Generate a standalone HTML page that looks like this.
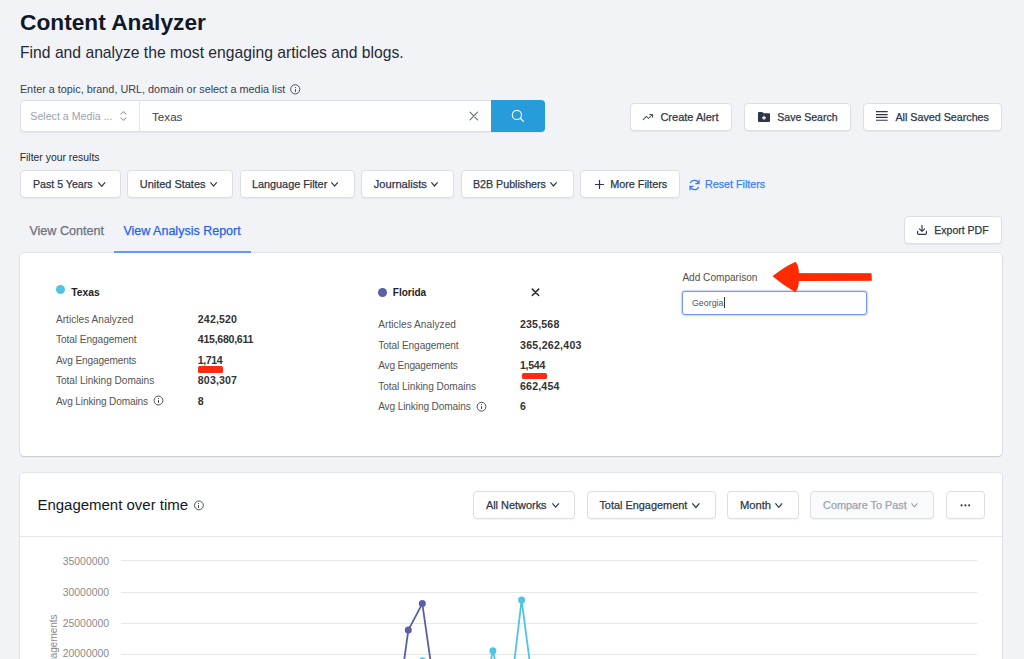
<!DOCTYPE html>
<html><head><meta charset="utf-8">
<style>
*{box-sizing:border-box;margin:0;padding:0}
html,body{width:1024px;height:659px;overflow:hidden}
body{background:#f2f3f6;font-family:"Liberation Sans",sans-serif;position:relative}
.t{position:absolute;white-space:nowrap}
.a{position:absolute}
.btn{position:absolute;background:#fff;border:1px solid #dcdfe4;border-radius:4px;box-shadow:0 1px 1px rgba(16,24,40,0.05)}
svg{position:absolute;overflow:visible}
</style></head>
<body>
<div class="t" style="left:20px;top:6.8px;font-size:22.71px;line-height:30px;font-weight:bold;color:#111827;">Content Analyzer</div>
<div class="t" style="left:20px;top:42.7px;font-size:15.69px;line-height:20px;font-weight:normal;color:#1f2937;">Find and analyze the most engaging articles and blogs.</div>
<div class="t" style="left:19.9px;top:82.2px;font-size:10.84px;line-height:14px;font-weight:normal;color:#374151;">Enter a topic, brand, URL, domain or select a media list</div>
<svg style="left:0;top:0" width="1024" height="659"><circle cx="295.2" cy="89.3" r="4.6" fill="none" stroke="#4b5563" stroke-width="1"/><rect x="295" y="89" width="1" height="3" fill="#4b5563"/><rect x="295" y="87" width="1" height="1" fill="#4b5563"/></svg>
<div class="a" style="left:20px;top:100px;width:525px;height:32px;background:#fff;border:1px solid #dcdfe4;border-radius:4px;box-shadow:0 1px 1px rgba(16,24,40,0.05)"></div>
<div class="a" style="left:139px;top:101px;width:1px;height:30px;background:#e3e6ea"></div>
<div class="t" style="left:30.3px;top:109.3px;font-size:10.65px;line-height:14px;font-weight:normal;color:#9ca3af;">Select a Media ...</div>
<svg style="left:120px;top:111px" width="7" height="10" viewBox="0 0 7 10"><path d="M0.6 3.4 L3.5 0.7 L6.4 3.4 M0.6 6.6 L3.5 9.3 L6.4 6.6" fill="none" stroke="#9ca3af" stroke-width="1.1"/></svg>
<div class="t" style="left:152px;top:108.8px;font-size:11.66px;line-height:15px;font-weight:normal;color:#3f3f46;">Texas</div>
<svg style="left:0;top:0" width="1024" height="659"><path d="M470 112.2 L477.6 119.8 M477.6 112.2 L470 119.8" stroke="#6b7280" stroke-width="1.2" stroke-linecap="round"/></svg>
<div class="a" style="left:491px;top:100px;width:54px;height:32px;background:#279cdb;border-radius:0 4px 4px 0"></div>
<svg style="left:511px;top:109px" width="14" height="14" viewBox="0 0 14 14"><circle cx="5.9" cy="5.9" r="4.6" fill="none" stroke="#fff" stroke-width="1.15"/><path d="M9.3 9.3 L12.4 12.4" stroke="#fff" stroke-width="1.3" stroke-linecap="round"/></svg>
<div class="btn" style="left:630px;top:103px;width:102px;height:28px;background:#fff"></div>
<svg style="left:0;top:0" width="1024" height="659"><path d="M643.2 119.6 L646.4 116.4 L648.5 118.5 L652.3 114.7 M649.7 114.4 L652.6 114.4 L652.6 117.3" fill="none" stroke="#4b5563" stroke-width="1.05" stroke-linecap="round" stroke-linejoin="round"/></svg>
<div class="t" style="left:660.4px;top:109.6px;font-size:11.03px;line-height:14px;font-weight:normal;color:#2d3748;-webkit-text-stroke:0.25px #2d3748;">Create Alert</div>
<div class="btn" style="left:744px;top:103px;width:107px;height:28px;background:#fff"></div>
<svg style="left:758px;top:111.5px" width="12" height="10" viewBox="0 0 12 10"><path d="M0 1 Q0 0 1 0 L4.3 0 L5.5 1.3 L11 1.3 Q12 1.3 12 2.3 L12 9 Q12 10 11 10 L1 10 Q0 10 0 9 Z" fill="#2d3748"/><path d="M6 3.8 L6 7.8 M4 5.8 L8 5.8" stroke="#fff" stroke-width="1.2"/></svg>
<div class="t" style="left:777.3px;top:109.6px;font-size:10.53px;line-height:14px;font-weight:normal;color:#2d3748;-webkit-text-stroke:0.25px #2d3748;">Save Search</div>
<div class="btn" style="left:863px;top:103px;width:139px;height:28px;background:#fff"></div>
<svg style="left:876px;top:111px" width="12" height="11" viewBox="0 0 12 11"><path d="M0 0.7 H11.7 M0 3.55 H11.7 M0 6.4 H11.7 M0 9.25 H11.7" stroke="#2d3748" stroke-width="1.2"/></svg>
<div class="t" style="left:895.4px;top:109.5px;font-size:10.72px;line-height:14px;font-weight:normal;color:#2d3748;-webkit-text-stroke:0.25px #2d3748;">All Saved Searches</div>
<div class="t" style="left:19.7px;top:150.7px;font-size:10.41px;line-height:14px;font-weight:normal;color:#1f2937;">Filter your results</div>
<div class="btn" style="left:20px;top:170px;width:101px;height:28px;background:#fff"></div>
<div class="btn" style="left:127px;top:170px;width:106px;height:28px;background:#fff"></div>
<div class="btn" style="left:240px;top:170px;width:115px;height:28px;background:#fff"></div>
<div class="btn" style="left:361px;top:170px;width:93px;height:28px;background:#fff"></div>
<div class="btn" style="left:461px;top:170px;width:113px;height:28px;background:#fff"></div>
<div class="btn" style="left:580px;top:170px;width:100px;height:28px;background:#fff"></div>
<div class="t" style="left:33px;top:176.9px;font-size:10.62px;line-height:14px;font-weight:normal;color:#2d3748;-webkit-text-stroke:0.25px #2d3748;">Past 5 Years</div>
<svg style="left:96.6px;top:181.05px" width="9.5" height="6.5" viewBox="-1 -1 9.5 6.5"><path d="M0.4 0.4 L3.75 4.3 L7.1 0.4" fill="none" stroke="#2d3748" stroke-width="1.2"/></svg>
<div class="t" style="left:139.8px;top:176.9px;font-size:10.94px;line-height:14px;font-weight:normal;color:#2d3748;-webkit-text-stroke:0.25px #2d3748;">United States</div>
<svg style="left:209.3px;top:181.17000000000002px" width="9.099999999999994" height="6.259999999999996" viewBox="-1 -1 9.099999999999994 6.259999999999996"><path d="M0.4 0.4 L3.549999999999997 4.059999999999996 L6.699999999999994 0.4" fill="none" stroke="#2d3748" stroke-width="1.2"/></svg>
<div class="t" style="left:252px;top:176.9px;font-size:10.83px;line-height:14px;font-weight:normal;color:#2d3748;-webkit-text-stroke:0.25px #2d3748;">Language Filter</div>
<svg style="left:330.4px;top:181.14px" width="9.200000000000045" height="6.320000000000027" viewBox="-1 -1 9.200000000000045 6.320000000000027"><path d="M0.4 0.4 L3.6000000000000227 4.120000000000027 L6.800000000000045 0.4" fill="none" stroke="#2d3748" stroke-width="1.2"/></svg>
<div class="t" style="left:373.8px;top:176.9px;font-size:11.1px;line-height:14px;font-weight:normal;color:#2d3748;-webkit-text-stroke:0.25px #2d3748;">Journalists</div>
<svg style="left:430.4px;top:181.20000000000002px" width="9.0" height="6.2" viewBox="-1 -1 9.0 6.2"><path d="M0.4 0.4 L3.5 4.0 L6.6 0.4" fill="none" stroke="#2d3748" stroke-width="1.2"/></svg>
<div class="t" style="left:473px;top:176.9px;font-size:10.66px;line-height:14px;font-weight:normal;color:#2d3748;-webkit-text-stroke:0.25px #2d3748;">B2B Publishers</div>
<svg style="left:549px;top:181.20000000000002px" width="9" height="6.2" viewBox="-1 -1 9 6.2"><path d="M0.4 0.4 L3.5 4.0 L6.6 0.4" fill="none" stroke="#2d3748" stroke-width="1.2"/></svg>
<svg style="left:595px;top:180px" width="9" height="9" viewBox="0 0 9 9"><path d="M4.5 0 V9 M0 4.5 H9" stroke="#2d3748" stroke-width="1.2"/></svg>
<div class="t" style="left:610.2px;top:176.9px;font-size:10.81px;line-height:14px;font-weight:normal;color:#2d3748;-webkit-text-stroke:0.25px #2d3748;">More Filters</div>
<svg style="left:688.5px;top:178.5px" width="11" height="12" viewBox="0 0 11 12"><path d="M9.6 4.6 A4.4 4.4 0 0 0 1.3 4.0 M1.4 7.4 A4.4 4.4 0 0 0 9.7 8.0" fill="none" stroke="#3b7ff2" stroke-width="1.3"/><path d="M10 0.8 L10 4.6 L6.4 4.6 M1 11.2 L1 7.4 L4.6 7.4" fill="none" stroke="#3b7ff2" stroke-width="1.3"/></svg>
<div class="t" style="left:705px;top:176.9px;font-size:10.73px;line-height:14px;font-weight:normal;color:#3b7ff2;-webkit-text-stroke:0.25px #3b7ff2;">Reset Filters</div>
<div class="t" style="left:29.4px;top:223.1px;font-size:12.58px;line-height:16px;font-weight:normal;color:#6b7280;-webkit-text-stroke:0.25px #6b7280;">View Content</div>
<div class="t" style="left:123.4px;top:222.9px;font-size:12.53px;line-height:16px;font-weight:normal;color:#2563eb;-webkit-text-stroke:0.25px #2563eb;">View Analysis Report</div>
<div class="btn" style="left:904px;top:216px;width:98px;height:28px;background:#fff"></div>
<svg style="left:917px;top:225px" width="10" height="10" viewBox="0 0 10 10"><path d="M5 0.3 V6.3 M2.4 3.8 L5 6.4 L7.6 3.8 M0.6 6.2 V8.2 Q0.6 9.3 1.7 9.3 H8.3 Q9.4 9.3 9.4 8.2 V6.2" fill="none" stroke="#2d3748" stroke-width="1.15" stroke-linecap="round" stroke-linejoin="round"/></svg>
<div class="t" style="left:934.3px;top:222.6px;font-size:10.52px;line-height:14px;font-weight:normal;color:#2d3748;-webkit-text-stroke:0.25px #2d3748;">Export PDF</div>
<div class="a" style="left:20px;top:253px;width:982px;height:203px;background:#fff;border-radius:4px;box-shadow:0 0 0 1px rgba(0,0,0,0.06),0 1px 1.5px rgba(0,0,0,0.12)"></div>
<div class="a" style="left:114px;top:251px;width:137px;height:2px;background:#6099f6"></div>
<div class="a" style="left:55.7px;top:284.9px;width:9px;height:9px;border-radius:50%;background:#4ec5e3"></div>
<div class="t" style="left:71.2px;top:285.8px;font-size:10.3px;line-height:13px;font-weight:bold;color:#222222;">Texas</div>
<div class="t" style="left:55.9px;top:312.8px;font-size:10.1px;line-height:13px;letter-spacing:0.031px;font-weight:normal;color:#555555;">Articles Analyzed</div>
<div class="t" style="left:55.9px;top:333.1px;font-size:10.1px;line-height:13px;letter-spacing:-0.04px;font-weight:normal;color:#555555;">Total Engagement</div>
<div class="t" style="left:55.9px;top:353.7px;font-size:10.1px;line-height:13px;letter-spacing:-0.128px;font-weight:normal;color:#555555;">Avg Engagements</div>
<div class="t" style="left:55.9px;top:374.3px;font-size:10.1px;line-height:13px;letter-spacing:-0.02px;font-weight:normal;color:#555555;">Total Linking Domains</div>
<div class="t" style="left:55.9px;top:395px;font-size:10.1px;line-height:13px;letter-spacing:-0.134px;font-weight:normal;color:#555555;">Avg Linking Domains</div>
<div class="t" style="left:197.8px;top:311.5px;font-size:10.6px;line-height:14px;letter-spacing:0.15px;font-weight:bold;color:#333333;">242,520</div>
<div class="t" style="left:197.8px;top:332.1px;font-size:10.6px;line-height:14px;letter-spacing:-0.27px;font-weight:bold;color:#333333;">415,680,611</div>
<div class="t" style="left:197.8px;top:352.7px;font-size:10.6px;line-height:14px;letter-spacing:-0.4px;font-weight:bold;color:#333333;">1,714</div>
<div class="t" style="left:197.8px;top:372.8px;font-size:10.6px;line-height:14px;letter-spacing:0.15px;font-weight:bold;color:#333333;">803,307</div>
<div class="t" style="left:197.8px;top:394px;font-size:10.6px;line-height:14px;font-weight:bold;color:#333333;">8</div>
<svg style="left:0;top:0" width="1024" height="659"><circle cx="158.5" cy="400.5" r="4.4" fill="none" stroke="#505050" stroke-width="1"/><rect x="158" y="400" width="1" height="3" fill="#505050"/><rect x="158" y="398" width="1" height="1" fill="#505050"/></svg>
<div class="a" style="left:377.5px;top:287.8px;width:9px;height:9px;border-radius:50%;background:#5a5ea8"></div>
<div class="t" style="left:392.8px;top:286.25px;font-size:10.02px;line-height:13px;font-weight:bold;color:#222222;">Florida</div>
<svg style="left:0;top:0" width="1024" height="659"><path d="M532.3 289.1 L538.7 295.5 M538.7 289.1 L532.3 295.5" stroke="#2a2a2a" stroke-width="1.5" stroke-linecap="round"/></svg>
<div class="t" style="left:378.2px;top:318.3px;font-size:10.1px;line-height:13px;letter-spacing:0.057px;font-weight:normal;color:#555555;">Articles Analyzed</div>
<div class="t" style="left:378.2px;top:338.7px;font-size:10.1px;line-height:13px;letter-spacing:-0.067px;font-weight:normal;color:#555555;">Total Engagement</div>
<div class="t" style="left:378.2px;top:359.1px;font-size:10.1px;line-height:13px;letter-spacing:-0.185px;font-weight:normal;color:#555555;">Avg Engagements</div>
<div class="t" style="left:378.2px;top:379.5px;font-size:10.1px;line-height:13px;letter-spacing:-0.045px;font-weight:normal;color:#555555;">Total Linking Domains</div>
<div class="t" style="left:378.2px;top:400.3px;font-size:10.1px;line-height:13px;letter-spacing:-0.116px;font-weight:normal;color:#555555;">Avg Linking Domains</div>
<div class="t" style="left:520px;top:317.3px;font-size:10.6px;line-height:14px;letter-spacing:0.167px;font-weight:bold;color:#333333;">235,568</div>
<div class="t" style="left:520px;top:337.7px;font-size:10.6px;line-height:14px;letter-spacing:0.26px;font-weight:bold;color:#333333;">365,262,403</div>
<div class="t" style="left:520px;top:358.1px;font-size:10.6px;line-height:14px;letter-spacing:-0.3px;font-weight:bold;color:#333333;">1,544</div>
<div class="t" style="left:520px;top:378.5px;font-size:10.6px;line-height:14px;letter-spacing:0.184px;font-weight:bold;color:#333333;">662,454</div>
<div class="t" style="left:520px;top:399.3px;font-size:10.6px;line-height:14px;font-weight:bold;color:#333333;">6</div>
<svg style="left:0;top:0" width="1024" height="659"><circle cx="481.5" cy="406.7" r="4.4" fill="none" stroke="#505050" stroke-width="1"/><rect x="481" y="406" width="1" height="3" fill="#505050"/><rect x="481" y="404" width="1" height="1" fill="#505050"/></svg>
<div class="a" style="left:198px;top:366px;width:25px;height:6.6px;background:#ff2a10;border-radius:1.5px"></div>
<div class="a" style="left:521.5px;top:372.5px;width:25px;height:6.8px;background:#ff2a10;border-radius:1.5px"></div>
<div class="t" style="left:682.4px;top:271.3px;font-size:10.09px;line-height:13px;font-weight:normal;color:#505050;">Add Comparison</div>
<div class="a" style="left:682px;top:290.5px;width:184.5px;height:24.5px;background:#fff;border:1.6px solid #7398f4;border-radius:3px;box-shadow:0 0 0 1.2px rgba(107,142,242,0.3)"></div>
<div class="t" style="left:692px;top:297.6px;font-size:8.84px;line-height:11px;font-weight:normal;color:#555555;">Georgia</div>
<div class="a" style="left:724px;top:297px;width:1px;height:11px;background:#333"></div>
<svg style="left:0;top:0" width="1024" height="659"><path d="M773.5 276.3 Q785 267 795.5 262.5 Q798.5 267 798.3 273.6 L871 273.8 L871.2 280.2 L798.3 280.4 Q798.2 287 795.3 291.5 Q784 285 773.5 276.3 Z" fill="#ff2a00" stroke="#ff2a00" stroke-width="1.2" stroke-linejoin="round"/></svg>
<div class="a" style="left:20px;top:473px;width:982px;height:200px;background:#fff;border-radius:4px;box-shadow:0 0 0 1px rgba(0,0,0,0.06),0 1px 1.5px rgba(0,0,0,0.12)"></div>
<div class="a" style="left:20px;top:536px;width:982px;height:1px;background:#e5e7eb"></div>
<div class="t" style="left:37.4px;top:494.9px;font-size:14.99px;line-height:19px;font-weight:normal;color:#111827;">Engagement over time</div>
<svg style="left:0;top:0" width="1024" height="659"><circle cx="198.9" cy="505.4" r="4.4" fill="none" stroke="#4b5563" stroke-width="1"/><rect x="198" y="505" width="1" height="3" fill="#4b5563"/><rect x="198" y="503" width="1" height="1" fill="#4b5563"/></svg>
<div class="btn" style="left:473px;top:491px;width:102px;height:28px;background:#fff"></div>
<div class="t" style="left:485.9px;top:497.8px;font-size:10.93px;line-height:14px;font-weight:normal;color:#2d3748;-webkit-text-stroke:0.25px #2d3748;">All Networks</div>
<svg style="left:550.8px;top:501.81px" width="9.300000000000068" height="6.380000000000041" viewBox="-1 -1 9.300000000000068 6.380000000000041"><path d="M0.4 0.4 L3.650000000000034 4.180000000000041 L6.900000000000068 0.4" fill="none" stroke="#2d3748" stroke-width="1.2"/></svg>
<div class="btn" style="left:587px;top:491px;width:128.5px;height:28px;background:#fff"></div>
<div class="t" style="left:599.4px;top:497.8px;font-size:10.92px;line-height:14px;font-weight:normal;color:#2d3748;-webkit-text-stroke:0.25px #2d3748;">Total Engagement</div>
<svg style="left:690.7px;top:501.66px" width="9.799999999999955" height="6.679999999999972" viewBox="-1 -1 9.799999999999955 6.679999999999972"><path d="M0.4 0.4 L3.8999999999999773 4.479999999999972 L7.399999999999954 0.4" fill="none" stroke="#2d3748" stroke-width="1.2"/></svg>
<div class="btn" style="left:727px;top:491px;width:71.5px;height:28px;background:#fff"></div>
<div class="t" style="left:740px;top:497.8px;font-size:11.2px;line-height:15px;font-weight:normal;color:#2d3748;-webkit-text-stroke:0.25px #2d3748;">Month</div>
<svg style="left:773.7px;top:501.72px" width="9.599999999999909" height="6.559999999999945" viewBox="-1 -1 9.599999999999909 6.559999999999945"><path d="M0.4 0.4 L3.7999999999999545 4.359999999999945 L7.199999999999909 0.4" fill="none" stroke="#2d3748" stroke-width="1.2"/></svg>
<div class="btn" style="left:810px;top:491px;width:124px;height:28px;background:#f9fafb"></div>
<div class="t" style="left:823.1px;top:497.8px;font-size:10.85px;line-height:14px;font-weight:normal;color:#9ca3af;-webkit-text-stroke:0.25px #9ca3af;">Compare To Past</div>
<svg style="left:909.6px;top:501.96000000000004px" width="8.799999999999955" height="6.0799999999999725" viewBox="-1 -1 8.799999999999955 6.0799999999999725"><path d="M0.4 0.4 L3.3999999999999773 3.8799999999999724 L6.399999999999954 0.4" fill="none" stroke="#9ca3af" stroke-width="1.2"/></svg>
<div class="btn" style="left:946px;top:491px;width:38.5px;height:28px;background:#fff"></div>
<svg style="left:960px;top:503.5px" width="11" height="3" viewBox="0 0 11 3"><circle cx="1.6" cy="1.3" r="1.1" fill="#2d3748"/><circle cx="5.4" cy="1.3" r="1.1" fill="#2d3748"/><circle cx="9.2" cy="1.3" r="1.1" fill="#2d3748"/></svg>
<div class="a" style="left:120.5px;top:560.3px;width:856px;height:1px;background:#e6e6e6"></div>
<div class="a" style="left:120.5px;top:591.5px;width:856px;height:1px;background:#e6e6e6"></div>
<div class="a" style="left:120.5px;top:622.7px;width:856px;height:1px;background:#e6e6e6"></div>
<div class="a" style="left:120.5px;top:653.8px;width:856px;height:1px;background:#e6e6e6"></div>
<div class="t" style="left:62.8px;top:554.8px;font-size:10.39px;line-height:14px;font-weight:normal;color:#8a8a8a;">35000000</div>
<div class="t" style="left:62.8px;top:585.6px;font-size:10.39px;line-height:14px;font-weight:normal;color:#8a8a8a;">30000000</div>
<div class="t" style="left:62.8px;top:616.6px;font-size:10.39px;line-height:14px;font-weight:normal;color:#8a8a8a;">25000000</div>
<div class="t" style="left:62.8px;top:647.4px;font-size:10.39px;line-height:14px;font-weight:normal;color:#8a8a8a;">20000000</div>
<div class="t" id="yl" style="left:48.5px;top:700px;font-size:10px;line-height:10px;color:#8a8a8a;transform-origin:0 0;transform:rotate(-90deg)">Total Engagements</div>
<svg style="left:0;top:0" width="1024" height="659">
<polyline points="400.5,687 408.3,630.1 422.3,603.6 434.3,687" fill="none" stroke="#5a5ea8" stroke-width="1.8" stroke-linejoin="round"/>
<circle cx="408.3" cy="630.1" r="3.5" fill="#5a5ea8"/><circle cx="422.3" cy="603.6" r="3.5" fill="#5a5ea8"/>
<polyline points="489.5,667 492.9,650.7 496.6,667" fill="none" stroke="#4ec5e3" stroke-width="1.8" stroke-linejoin="round"/>
<polyline points="507.6,718 521.6,600.1 537.2,718" fill="none" stroke="#4ec5e3" stroke-width="1.8" stroke-linejoin="round"/>
<circle cx="492.9" cy="650.7" r="3.5" fill="#4ec5e3"/><circle cx="521.6" cy="600.1" r="3.5" fill="#4ec5e3"/>
<circle cx="422.5" cy="660.8" r="3.5" fill="#4ec5e3"/>
</svg>
</body></html>
